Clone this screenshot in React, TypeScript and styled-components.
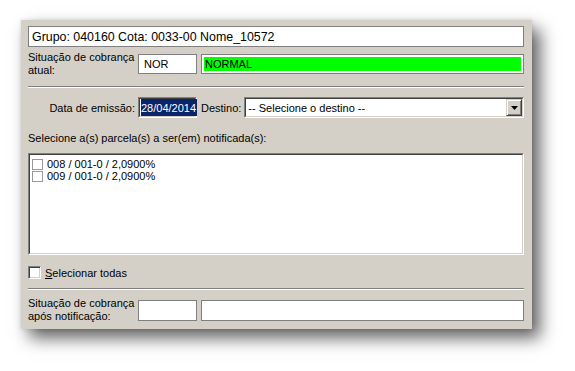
import React from "react";
import styled, { createGlobalStyle } from "styled-components";

const Global = createGlobalStyle`
  html, body { margin: 0; padding: 0; background: #ffffff; }
  body { font-family: "Liberation Sans", Arial, sans-serif; color: #000; min-height: 371px; }
  #root { min-height: 371px; padding-top: 20px; }
  * { box-sizing: border-box; }
`;

const Panel = styled.div`
  margin: 0 0 0 21px;
  width: 511px;
  height: 309px;
  padding: 6px 8px 0 7px;
  background: #d4d0c8;
  display: flex;
  flex-direction: column;
  box-shadow: 8px 9px 16px rgba(0, 0, 0, 0.62), 0 0 4px rgba(0, 0, 0, 0.12);
  font-size: 11px;
`;

const HeaderField = styled.div`
  height: 21px;
  border: 1px solid #808080;
  background: #fff;
  font-size: 12.4px;
  padding-left: 3px;
  display: flex;
  align-items: center;
  white-space: nowrap;
`;

const Row = styled.div<{ $mt: number; $h: number }>`
  margin-top: ${(p) => p.$mt}px;
  height: ${(p) => p.$h}px;
  display: flex;
  align-items: center;
`;

const StackLabel = styled.div`
  width: 110px;
  line-height: 13px;
  flex: none;
`;

const RightLabel = styled.div`
  width: 110px;
  padding-right: 3px;
  text-align: right;
  flex: none;
  white-space: nowrap;
`;

const FlatBox = styled.div<{ $w?: number; $h: number }>`
  ${(p) => (p.$w ? `width: ${p.$w}px; flex: none;` : "flex: 1;")}
  height: ${(p) => p.$h}px;
  border: 1px solid #808080;
  background: #fff;
  padding: 2px;
  display: flex;
  align-items: stretch;
  & + & {
    margin-left: 4px;
  }
`;

const BoxText = styled.span<{ $green?: boolean }>`
  flex: 1;
  display: flex;
  align-items: center;
  padding-left: ${(p) => (p.$green ? "1px" : "3px")};
  background: ${(p) => (p.$green ? "#00ff00" : "transparent")};
`;

const Separator = styled.div<{ $mt: number }>`
  margin-top: ${(p) => p.$mt}px;
  height: 2px;
  border-top: 1px solid #808080;
  border-bottom: 1px solid #ffffff;
`;

const Sunken = styled.div`
  border-style: solid;
  border-width: 1px;
  border-color: #808080 #ffffff #ffffff #808080;
  background: #fff;
`;

const SunkenInner = styled.div`
  height: 100%;
  border-style: solid;
  border-width: 1px;
  border-color: #404040 #d4d0c8 #d4d0c8 #404040;
`;

const DateInput = styled(Sunken)`
  width: 59px;
  height: 21px;
  flex: none;
`;

const DateInner = styled(SunkenInner)`
  padding: 0 0 0 1px;
  display: flex;
  align-items: stretch;
`;

const Selected = styled.span`
  background: #0a246a;
  color: #fff;
  display: flex;
  align-items: center;
  padding: 0 1px 0 0;
`;

const InlineLabel = styled.span`
  margin: 0 3px 0 4px;
  white-space: nowrap;
`;

const SelectBox = styled(Sunken)`
  flex: 1;
  height: 21px;
`;

const SelectInner = styled(SunkenInner)`
  display: flex;
  align-items: stretch;
  padding-left: 2px;
`;

const SelectText = styled.span`
  flex: 1;
  display: flex;
  align-items: center;
`;

const DropButton = styled.div`
  width: 16px;
  flex: none;
  background: #d4d0c8;
  border-style: solid;
  border-width: 1px;
  border-color: #d4d0c8 #404040 #404040 #d4d0c8;
  display: flex;
  align-items: center;
  justify-content: center;
  box-shadow: inset 1px 1px 0 #ffffff, inset -1px -1px 0 #808080;
`;

const PlainLabel = styled.div<{ $mt: number }>`
  margin-top: ${(p) => p.$mt}px;
  height: 13px;
  line-height: 13px;
  white-space: nowrap;
`;

const ListBox = styled(Sunken)`
  margin-top: 8px;
  height: 102px;
`;

const ListInner = styled(SunkenInner)`
  padding: 3px 0 0 2px;
  display: flex;
  flex-direction: column;
`;

const ListItem = styled.div`
  height: 12px;
  display: flex;
  align-items: center;
  line-height: 12px;
`;

const SmallCheck = styled.span`
  width: 11px;
  height: 11px;
  border: 1px solid #9a9a9a;
  background: #fff;
  margin-right: 4px;
  flex: none;
`;

const CheckRow = styled.label`
  margin-top: 11px;
  height: 13px;
  display: flex;
  align-items: center;
`;

const BigCheck = styled.span`
  width: 13px;
  height: 13px;
  flex: none;
  background: #fff;
  border-style: solid;
  border-width: 1px;
  border-color: #808080 #ffffff #ffffff #808080;
  box-shadow: inset 1px 1px 0 #404040, inset -1px -1px 0 #d4d0c8;
  margin-right: 4px;
`;

const Accel = styled.span`
  text-decoration: underline;
`;

export default function App() {
  return (
    <>
      <Global />
      <Panel>
        <HeaderField>Grupo: 040160 Cota: 0033-00 Nome_10572</HeaderField>
        <Row $mt={4} $h={26}>
          <StackLabel>
            Situação de cobrança
            <br />
            atual:
          </StackLabel>
          <FlatBox $w={59} $h={20}>
            <BoxText>NOR</BoxText>
          </FlatBox>
          <FlatBox $h={20}>
            <BoxText $green>NORMAL</BoxText>
          </FlatBox>
        </Row>
        <Separator $mt={9} />
        <Row $mt={9} $h={21}>
          <RightLabel>Data de emissão:</RightLabel>
          <DateInput>
            <DateInner>
              <Selected>28/04/2014</Selected>
            </DateInner>
          </DateInput>
          <InlineLabel>Destino:</InlineLabel>
          <SelectBox>
            <SelectInner>
              <SelectText>-- Selecione o destino --</SelectText>
              <DropButton>
                <svg width="7" height="4" viewBox="0 0 7 4">
                  <path d="M0 0h7L3.5 4z" fill="#000" />
                </svg>
              </DropButton>
            </SelectInner>
          </SelectBox>
        </Row>
        <PlainLabel $mt={14}>Selecione a(s) parcela(s) a ser(em) notificada(s):</PlainLabel>
        <ListBox>
          <ListInner>
            <ListItem>
              <SmallCheck />
              008 / 001-0 / 2,0900%
            </ListItem>
            <ListItem>
              <SmallCheck />
              009 / 001-0 / 2,0900%
            </ListItem>
          </ListInner>
        </ListBox>
        <CheckRow>
          <BigCheck />
          <span>
            <Accel>S</Accel>elecionar todas
          </span>
        </CheckRow>
        <Separator $mt={9} />
        <Row $mt={7} $h={26}>
          <StackLabel>
            Situação de cobrança
            <br />
            após notificação:
          </StackLabel>
          <FlatBox $w={59} $h={21} />
          <FlatBox $h={21} />
        </Row>
      </Panel>
    </>
  );
}
